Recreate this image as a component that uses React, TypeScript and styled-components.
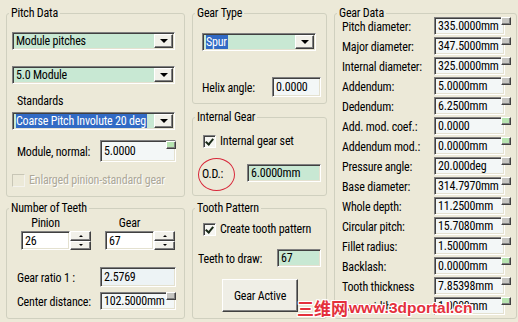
import styled, { createGlobalStyle } from 'styled-components';

const GlobalStyle = createGlobalStyle`
  html, body { margin: 0; padding: 0; background: #ece9d8; }
  body {
    font-family: "Roboto Condensed", "Liberation Sans Narrow", "Liberation Sans", Arial, sans-serif;
    font-size: 12px;
    letter-spacing: -0.2px;
    color: #000;
  }
`;

const gearData = [
  { label: 'Pitch diameter:', value: '335.0000mm', tone: 'gray' },
  { label: 'Major diameter:', value: '347.5000mm', tone: 'gray' },
  { label: 'Internal diameter:', value: '325.0000mm', tone: 'gray' },
  { label: 'Addendum:', value: '5.0000mm', tone: 'gray' },
  { label: 'Dedendum:', value: '6.2500mm', tone: 'gray' },
  { label: 'Add. mod. coef.:', value: '0.0000', tone: 'green' },
  { label: 'Addendum mod.:', value: '0.0000mm', tone: 'green' },
  { label: 'Pressure angle:', value: '20.000deg', tone: 'gray' },
  { label: 'Base diameter:', value: '314.7970mm', tone: 'gray' },
  { label: 'Whole depth:', value: '11.2500mm', tone: 'gray' },
  { label: 'Circular pitch:', value: '15.7080mm', tone: 'gray' },
  { label: 'Fillet radius:', value: '1.5000mm', tone: 'gray' },
  { label: 'Backlash:', value: '0.0000mm', tone: 'green' },
  { label: 'Tooth thickness', value: '7.85398mm', tone: 'gray' },
  { label: 'Face width:', value: '1.0000mm', tone: 'green' },
] as const;

const MINT = '#c8e8d3';
const PALE = '#f3f7f7';

export default function App() {
  return (
    <>
      <GlobalStyle />
      <Window>
        <Column $w={179}>
          <Group $h={184}>
            <GroupTitle>Pitch Data</GroupTitle>
            <Stack $pt={18} $pl={5}>
              <Combo $w={163} $mt={0}>
                <ComboText>Module pitches</ComboText>
                <DropButton><Arrow /></DropButton>
              </Combo>
              <Combo $w={163} $mt={16}>
                <ComboText>5.0 Module</ComboText>
                <DropButton><Arrow /></DropButton>
              </Combo>
              <Caption $mt={10} $pl={5}>Standards</Caption>
              <Combo $w={163} $mt={3}>
                <ComboText><Selected>Coarse Pitch Involute 20 deg</Selected></ComboText>
                <DropButton><Arrow /></DropButton>
              </Combo>
              <Row $mt={10} $pl={5}>
                <Label $w={83}>Module, normal:</Label>
                <Field $w={76} $h={22} $bg={PALE}>
                  5.0000
                  <Nub $tone="green" $right={-1} $top={0} />
                </Field>
              </Row>
              <Row $mt={11} $pl={0}>
                <CheckBox $disabled />
                <CheckText $disabled>Enlarged pinion-standard gear</CheckText>
              </Row>
            </Stack>
          </Group>
          <Group $h={111} $mt={11}>
            <GroupTitle>Number of Teeth</GroupTitle>
            <Stack $pt={7} $pl={14}>
              <SpinRow>
                <SpinGroup>
                  <SpinCaption $w={49}>Pinion</SpinCaption>
                  <Spinner>
                    <Field $w={49} $h={19} $bg="#fff">26</Field>
                    <SpinButtons>
                      <SpinButton><SmallArrow $up /></SpinButton>
                      <SpinButton><SmallArrow /></SpinButton>
                    </SpinButtons>
                  </Spinner>
                </SpinGroup>
                <SpinGroup>
                  <SpinCaption $w={49}>Gear</SpinCaption>
                  <Spinner>
                    <Field $w={49} $h={19} $bg="#fff">67</Field>
                    <SpinButtons>
                      <SpinButton><SmallArrow $up /></SpinButton>
                      <SpinButton><SmallArrow /></SpinButton>
                    </SpinButtons>
                  </Spinner>
                </SpinGroup>
              </SpinRow>
              <Row $mt={17} $pl={-4}>
                <Label $w={83}>Gear ratio 1 :</Label>
                <Field $w={76} $h={20} $bg="#edf3f5">2.5769</Field>
              </Row>
              <Row $mt={5} $pl={-4}>
                <Label $w={83}>Center distance:</Label>
                <Field $w={76} $h={18} $bg={PALE}>
                  102.5000mm
                  <Nub $tone="gray" $right={-1} $top={-1} />
                </Field>
              </Row>
            </Stack>
          </Group>
        </Column>

        <Column $w={135}>
          <Group $h={91}>
            <GroupTitle>Gear Type</GroupTitle>
            <Stack $pt={19} $pl={9}>
              <Combo $w={114} $mt={0}>
                <ComboText><Selected>Spur</Selected></ComboText>
                <DropButton><Arrow /></DropButton>
              </Combo>
              <Row $mt={26} $pl={0}>
                <Label $w={70}>Helix angle:</Label>
                <Field $w={49} $h={20} $bg={PALE}>0.0000</Field>
              </Row>
            </Stack>
          </Group>
          <Group $h={79} $mt={13}>
            <GroupTitle>Internal Gear</GroupTitle>
            <Stack $pt={16} $pl={10}>
              <Row $mt={0} $pl={0}>
                <CheckBox $checked />
                <CheckText>Internal gear set</CheckText>
              </Row>
              <Row $mt={15} $pl={-1}>
                <Label $w={45}>
                  <Circled>O.D.:</Circled>
                </Label>
                <Field $w={74} $h={18} $bg={MINT}>6.0000mm</Field>
              </Row>
            </Stack>
          </Group>
          <Group $h={111} $mt={12}>
            <GroupTitle>Tooth Pattern</GroupTitle>
            <Stack $pt={13} $pl={10}>
              <Row $mt={0} $pl={0}>
                <CheckBox $checked />
                <CheckText>Create tooth pattern</CheckText>
              </Row>
              <Row $mt={12} $pl={-5}>
                <Label $w={79}>Teeth to draw:</Label>
                <Field $w={44} $h={18} $bg={MINT}>67</Field>
              </Row>
              <PushButton>Gear Active</PushButton>
            </Stack>
          </Group>
        </Column>

        <Column $w={183}>
          <Group $h={306}>
            <GroupTitle>Gear Data</GroupTitle>
            <DataGrid>
              {gearData.map(row => (
                <DataRow key={row.label}>
                  <DataLabel>{row.label}</DataLabel>
                  <Field $w={71} $h={18} $bg={PALE}>
                    {row.value}
                    <Nub $tone={row.tone} $right={-7} $top={-1} />
                  </Field>
                </DataRow>
              ))}
            </DataGrid>
          </Group>
        </Column>

        <Watermark>
          <WatermarkCjk>三维网</WatermarkCjk>
          <WatermarkUrl>www.3dportal.cn</WatermarkUrl>
        </Watermark>
      </Window>
    </>
  );
}

const Window = styled.div`
  position: relative;
  width: 518px;
  height: 322px;
  box-sizing: border-box;
  padding: 13px 0 0 6px;
  display: flex;
  gap: 7px;
  background: #ece9d8;
  overflow: hidden;
`;

const Column = styled.div<{ $w: number }>`
  width: ${p => p.$w}px;
  display: flex;
  flex-direction: column;
`;

const Group = styled.section<{ $h: number; $mt?: number }>`
  position: relative;
  box-sizing: border-box;
  height: ${p => p.$h}px;
  margin-top: ${p => p.$mt ?? 0}px;
  border: 1px solid #d0d0bf;
  border-radius: 3px;
`;

const GroupTitle = styled.span`
  position: absolute;
  top: -8px;
  left: 2px;
  padding: 0 2px;
  line-height: 15px;
  background: #ece9d8;
  white-space: nowrap;
`;

const Stack = styled.div<{ $pt: number; $pl: number }>`
  display: flex;
  flex-direction: column;
  align-items: flex-start;
  padding: ${p => p.$pt}px 0 0 ${p => p.$pl}px;
`;

const Row = styled.div<{ $mt: number; $pl: number }>`
  display: flex;
  align-items: center;
  margin-top: ${p => p.$mt}px;
  margin-left: ${p => p.$pl}px;
`;

const Label = styled.span<{ $w: number }>`
  width: ${p => p.$w}px;
  line-height: 15px;
  white-space: nowrap;
  padding-top: 2px;
`;

const Caption = styled.span<{ $mt: number; $pl: number }>`
  margin-top: ${p => p.$mt}px;
  padding-left: ${p => p.$pl}px;
  line-height: 15px;
`;

const sunken = `
  box-sizing: border-box;
  border: 1px solid;
  border-color: #808080 #ffffff #ffffff #808080;
  box-shadow: inset 1px 1px 0 #404040, inset -1px -1px 0 #e4e1d0;
`;

const raised = `
  box-sizing: border-box;
  border: 1px solid;
  border-color: #ffffff #404040 #404040 #ffffff;
  box-shadow: inset -1px -1px 0 #808080;
  background: #ece9d8;
`;

const Combo = styled.div<{ $w: number; $mt: number }>`
  ${sunken}
  display: flex;
  width: ${p => p.$w}px;
  height: 18px;
  margin-top: ${p => p.$mt}px;
  padding: 1px;
  background: ${MINT};
`;

const ComboText = styled.div`
  flex: 1;
  display: flex;
  align-items: center;
  padding-left: 2px;
  white-space: nowrap;
  overflow: hidden;
`;

const Selected = styled.span`
  background: #316ac5;
  color: #fff;
  line-height: 14px;
  padding: 0 1px 0 0;
`;

const DropButton = styled.div`
  ${raised}
  width: 19px;
  flex-shrink: 0;
  display: flex;
  align-items: center;
  justify-content: center;
  background: #f2f1ea;
`;

const Arrow = styled.span`
  width: 0;
  height: 0;
  border-left: 4px solid transparent;
  border-right: 4px solid transparent;
  border-top: 4px solid #000;
`;

const Field = styled.div<{ $w: number; $h: number; $bg: string }>`
  ${sunken}
  position: relative;
  width: ${p => p.$w}px;
  height: ${p => p.$h}px;
  background: ${p => p.$bg};
  padding: 0 0 0 3px;
  display: flex;
  align-items: center;
  white-space: nowrap;
`;

const Nub = styled.span<{ $tone: 'gray' | 'green'; $right: number; $top: number }>`
  ${raised}
  position: absolute;
  top: ${p => p.$top}px;
  right: ${p => p.$right}px;
  width: 10px;
  height: 8px;
  background: ${p => (p.$tone === 'green' ? '#b6e3b0' : '#c4c4c0')};
`;

const CheckBox = styled.span<{ $checked?: boolean; $disabled?: boolean }>`
  position: relative;
  box-sizing: border-box;
  width: 13px;
  height: 13px;
  border: 1px solid;
  border-color: ${p => (p.$disabled ? '#c8c6b6 #f4f3ee #f4f3ee #c8c6b6' : '#808080 #ffffff #ffffff #808080')};
  box-shadow: ${p => (p.$disabled ? 'none' : 'inset 1px 1px 0 #404040')};
  background: ${p => (p.$disabled ? '#ece9d8' : '#f6f6f2')};
  &::after {
    content: '';
    display: ${p => (p.$checked ? 'block' : 'none')};
    position: absolute;
    left: 3px;
    top: 1px;
    width: 3px;
    height: 6px;
    border: solid #1a2a18;
    border-width: 0 2px 2px 0;
    transform: rotate(40deg);
  }
`;

const CheckText = styled.span<{ $disabled?: boolean }>`
  margin-left: 4px;
  line-height: 15px;
  white-space: nowrap;
  color: ${p => (p.$disabled ? '#aca899' : '#000')};
  text-shadow: ${p => (p.$disabled ? '1px 1px 0 #fff' : 'none')};
`;

const SpinRow = styled.div`
  display: flex;
  gap: 14px;
`;

const SpinGroup = styled.div`
  display: flex;
  flex-direction: column;
`;

const SpinCaption = styled.span<{ $w: number }>`
  width: ${p => p.$w}px;
  text-align: center;
  line-height: 15px;
`;

const Spinner = styled.div`
  display: flex;
`;

const SpinButtons = styled.div`
  display: flex;
  flex-direction: column;
  width: 21px;
  height: 19px;
`;

const SpinButton = styled.div`
  ${raised}
  flex: 1;
  display: flex;
  align-items: center;
  justify-content: center;
  background: #f2f1ea;
`;

const SmallArrow = styled.span<{ $up?: boolean }>`
  width: 0;
  height: 0;
  border-left: 2px solid transparent;
  border-right: 2px solid transparent;
  ${p => (p.$up ? 'border-bottom: 2px solid #000;' : 'border-top: 2px solid #000;')}
`;

const Circled = styled.span`
  position: relative;
  &::after {
    content: '';
    position: absolute;
    left: -4px;
    top: -9px;
    width: 37px;
    height: 33px;
    box-sizing: border-box;
    border: 1px solid #d8283a;
    border-radius: 50%;
  }
`;

const PushButton = styled.div`
  ${raised}
  margin: 12px 0 0 19px;
  width: 76px;
  height: 33px;
  display: flex;
  align-items: center;
  justify-content: center;
  background: #efeee6;
`;

const DataGrid = styled.div`
  display: flex;
  flex-direction: column;
  gap: 2px;
  padding: 3px 0 0 7px;
`;

const DataRow = styled.div`
  display: flex;
  align-items: center;
  height: 18px;
`;

const DataLabel = styled.span`
  width: 92px;
  line-height: 15px;
  padding-top: 3px;
  white-space: nowrap;
`;

const Watermark = styled.div`
  position: absolute;
  left: 297px;
  top: 298px;
  display: flex;
  align-items: flex-end;
  white-space: nowrap;
  letter-spacing: 0;
  color: #e4303c;
  text-shadow: 1px 0 0 #fff, -1px 0 0 #fff, 0 1px 0 #fff, 0 -1px 0 #fff,
    1px 1px 0 #fff, -1px -1px 0 #fff, 1px -1px 0 #fff, -1px 1px 0 #fff;
`;

const WatermarkCjk = styled.span`
  font-family: "Noto Sans CJK SC", sans-serif;
  font-weight: 700;
  font-size: 17px;
  line-height: 19px;
`;

const WatermarkUrl = styled.span`
  font-family: "Liberation Sans", Arial, sans-serif;
  font-weight: 700;
  font-size: 15.5px;
  line-height: 17px;
  margin-left: 1px;
  margin-bottom: 1px;
`;
